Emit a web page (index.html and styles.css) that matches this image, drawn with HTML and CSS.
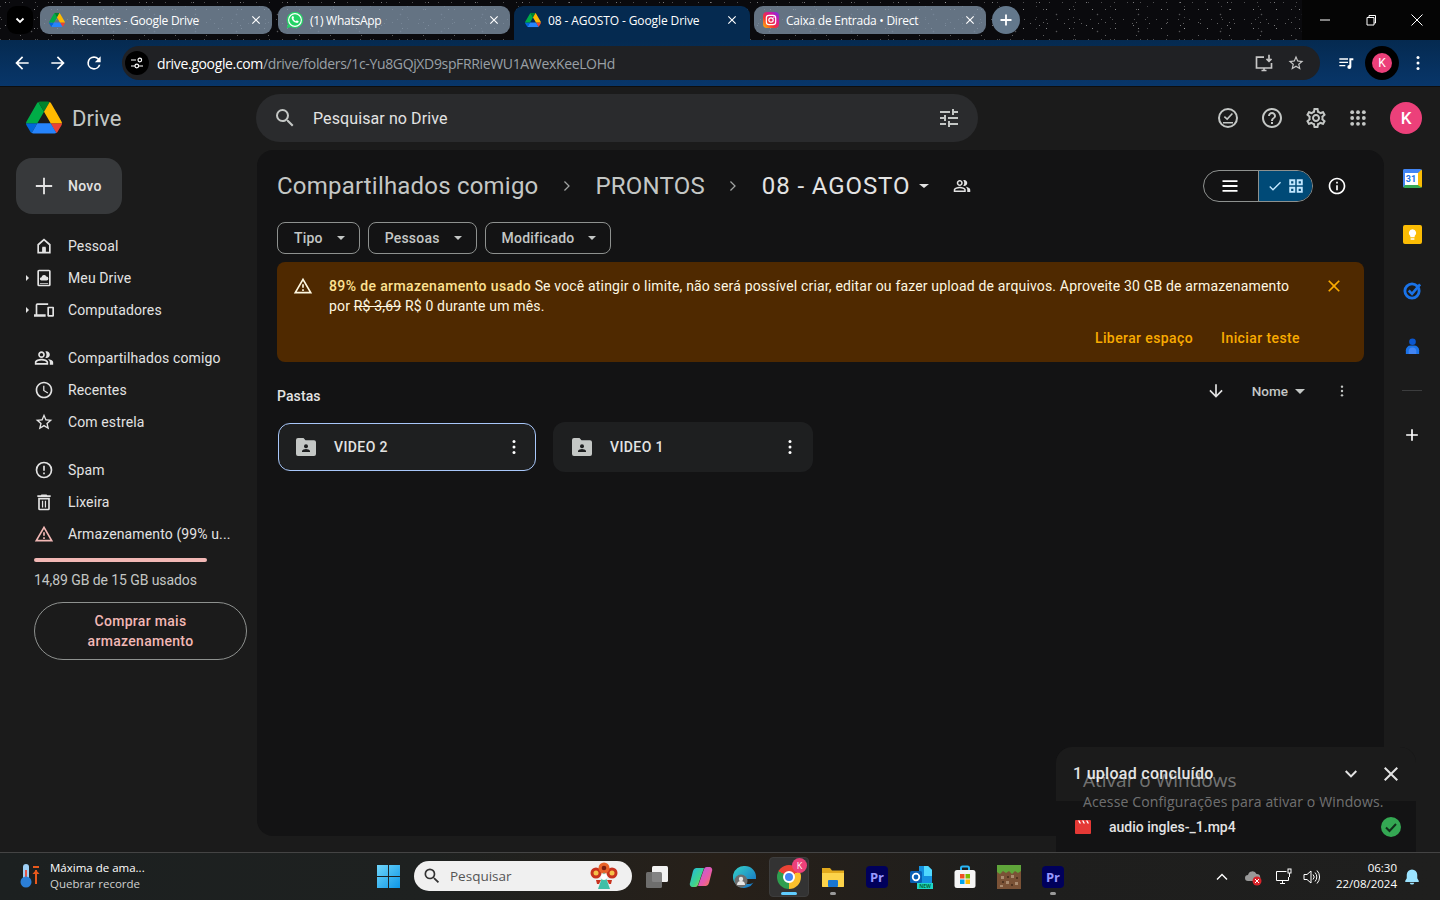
FILE: index.html
```html
<!DOCTYPE html>
<html lang="pt-BR">
<head>
<meta charset="utf-8">
<title>08 - AGOSTO - Google Drive</title>
<link rel="stylesheet" href="styles.css">
</head>
<body>
<svg class="sprite" xmlns="http://www.w3.org/2000/svg">
  <symbol id="drive" viewBox="0 0 87.3 78">
    <path fill="#0066da" d="m6.6 66.85 3.85 6.65c.8 1.4 1.95 2.5 3.3 3.3l13.75-23.8h-27.5c0 1.55.4 3.1 1.2 4.5z"/>
    <path fill="#00ac47" d="m43.65 25-13.75-23.8c-1.35.8-2.5 1.9-3.3 3.3l-25.4 44a9.06 9.06 0 0 0 -1.2 4.5h27.5z"/>
    <path fill="#ea4335" d="m73.55 76.8c1.35-.8 2.5-1.9 3.3-3.3l1.6-2.75 7.65-13.25c.8-1.4 1.2-2.95 1.2-4.5h-27.502l5.852 11.5z"/>
    <path fill="#00832d" d="m43.65 25 13.75-23.8c-1.35-.8-2.9-1.2-4.5-1.2h-18.5c-1.6 0-3.15.45-4.5 1.2z"/>
    <path fill="#2684fc" d="m59.8 53h-32.3l-13.75 23.8c1.35.8 2.9 1.2 4.5 1.2h50.8c1.6 0 3.15-.45 4.5-1.2z"/>
    <path fill="#ffba00" d="m73.4 26.5-12.7-22c-.8-1.4-1.95-2.5-3.3-3.3l-13.75 23.8 16.15 28h27.45c0-1.55-.4-3.1-1.2-4.5z"/>
  </symbol>
  <symbol id="x" viewBox="0 0 24 24"><path d="M19 6.41 17.59 5 12 10.59 6.41 5 5 6.41 10.59 12 5 17.59 6.41 19 12 13.41 17.59 19 19 17.59 13.41 12z"/></symbol>
  <symbol id="people" viewBox="0 0 24 24"><path d="M16.67 13.13C18.04 14.06 19 15.32 19 17v3h4v-3c0-2.18-3.57-3.47-6.33-3.87zM15 12c2.21 0 4-1.79 4-4s-1.79-4-4-4c-.47 0-.91.1-1.33.24C14.5 5.27 15 6.58 15 8s-.5 2.73-1.33 3.76c.42.14.86.24 1.33.24zM9 12c2.21 0 4-1.79 4-4s-1.79-4-4-4-4 1.79-4 4 1.79 4 4 4zm0-6c1.1 0 2 .9 2 2s-.9 2-2 2-2-.9-2-2 .9-2 2-2zM9 13c-2.67 0-8 1.34-8 4v3h16v-3c0-2.66-5.33-4-8-4zm6 5H3v-.99C3.2 16.29 6.3 15 9 15s5.8 1.29 6 2z"/></symbol>
  <symbol id="folder" viewBox="0 0 20 18"><path d="M2 0h5.5l2 2.2H18a2 2 0 0 1 2 2V16a2 2 0 0 1-2 2H2a2 2 0 0 1-2-2V2a2 2 0 0 1 2-2z"/><circle cx="10" cy="8.2" r="2" fill="#1e1f20"/><path fill="#1e1f20" d="M6 14v-.9c0-1.4 2.6-2.1 4-2.1s4 .7 4 2.1v.9z"/></symbol>
  <symbol id="dots" viewBox="0 0 24 24"><circle cx="12" cy="5.5" r="1.8"/><circle cx="12" cy="12" r="1.8"/><circle cx="12" cy="18.5" r="1.8"/></symbol>
  <symbol id="warn" viewBox="0 0 24 24"><path d="M1 21h22L12 2 1 21zm3.47-2L12 5.99 19.53 19H4.47zM11 16h2v2h-2zM11 10h2v4h-2z"/></symbol>
</svg>

<header class="tabstrip">
  <button class="tabsearch"><svg class="i14 line" viewBox="0 0 14 14"><path d="M3.5 5.500 7 9 10.500 5.500" stroke="#fff" stroke-width="1.800"/></svg></button>
  <div class="tab first">
    <svg class="fav" viewBox="0 0 87.3 78"><use href="#drive"/></svg>
    <span class="tab-title">Recentes - Google Drive</span>
    <svg class="tab-x"><use href="#x"/></svg>
  </div>
  <div class="tab">
    <svg class="fav wa" viewBox="0 0 24 24"><circle cx="12" cy="12" r="11" fill="#25d366"/><path fill="#25d366" d="M1 23l1.900-6.500 4.600 4.600z"/><circle cx="12" cy="12" r="8.500" fill="none" stroke="#fff" stroke-width="1.500"/><path fill="#fff" d="M8.600 7c.4-.4 1-.4 1.200.1l.8 1.800c.1.300 0 .6-.2.8l-.6.7c.7 1.400 1.900 2.500 3.400 3.200l.7-.8c.2-.2.5-.3.8-.2l1.800.8c.4.2.5.7.2 1.200-.6 1-1.700 1.500-2.900 1.200C10.500 15 8.300 12.800 7.600 10c-.3-1.100.2-2.300 1-3z"/></svg>
    <span class="tab-title">(1) WhatsApp</span>
    <svg class="tab-x"><use href="#x"/></svg>
  </div>
  <div class="tab active">
    <svg class="fav" viewBox="0 0 87.3 78"><use href="#drive"/></svg>
    <span class="tab-title">08 - AGOSTO - Google Drive</span>
    <svg class="tab-x"><use href="#x"/></svg>
  </div>
  <div class="tab">
    <svg class="fav" viewBox="0 0 24 24"><defs><linearGradient id="ig" x1="0" y1="1" x2="1" y2="0"><stop offset="0" stop-color="#fdc20a"/><stop offset=".35" stop-color="#f5372e"/><stop offset=".7" stop-color="#d3179e"/><stop offset="1" stop-color="#6a37f0"/></linearGradient></defs><rect width="24" height="24" rx="6" fill="url(#ig)"/><rect x="5" y="5" width="14" height="14" rx="4" fill="none" stroke="#fff" stroke-width="1.8"/><circle cx="12" cy="12" r="3.300" fill="none" stroke="#fff" stroke-width="1.8"/><circle cx="16.300" cy="7.700" r="1" fill="#fff"/></svg>
    <span class="tab-title">Caixa de Entrada • Direct</span>
    <svg class="tab-x"><use href="#x"/></svg>
  </div>
  <button class="newtab"><svg class="i14 line" viewBox="0 0 14 14"><path d="M7 1.500v11M1.500 7h11" stroke="#fff" stroke-width="1.800"/></svg></button>
  <div class="winctl">
    <span class="winbtn"><svg class="i14 line" viewBox="0 0 14 14"><path d="M2 7h10" stroke="#fff"/></svg></span>
    <span class="winbtn"><svg class="i14 line" viewBox="0 0 14 14"><path d="M3 4.500h7v7.500H3zM5 4.500V2.500h6.500V10H10" stroke="#fff"/></svg></span>
    <span class="winbtn"><svg class="i14 line" viewBox="0 0 14 14"><path d="M1.500 1.500l11 11M12.500 1.500l-11 11" stroke="#fff"/></svg></span>
  </div>
</header>

<nav class="toolbar">
  <button class="tbtn"><svg class="i20 white" viewBox="0 0 24 24"><path d="M20 11H7.830l5.590-5.590L12 4l-8 8 8 8 1.410-1.410L7.830 13H20z"/></svg></button>
  <button class="tbtn"><svg class="i20 white" viewBox="0 0 24 24"><path d="M12 4l-1.410 1.410L16.170 11H4v2h12.170l-5.580 5.590L12 20l8-8z"/></svg></button>
  <button class="tbtn"><svg class="i20 white" viewBox="0 0 24 24"><path d="M17.650 6.350A7.958 7.958 0 0 0 12 4a8 8 0 1 0 7.730 10h-2.080A6 6 0 1 1 12 6c1.660 0 3.140.69 4.220 1.780L13 11h7V4z"/></svg></button>
  <div class="omnibox">
    <span class="siteinfo"><svg class="i14 line" viewBox="0 0 14 14"><path d="M1 4h5M9 10h4M1 10h4" stroke="#fff" stroke-width="1.200"/><circle cx="9.800" cy="4" r="1.800" stroke="#fff" stroke-width="1.200"/><circle cx="6.800" cy="10" r="1.800" stroke="#fff" stroke-width="1.200"/></svg></span>
    <span class="url"><b>drive.google.com</b>/drive/folders/1c-Yu8GQjXD9spFRRieWU1AWexKeeLOHd</span>
    <svg class="i20 line omni-install" viewBox="0 0 24 24" stroke="#c7c7c7" stroke-width="2"><path d="M12 5H3v13h18v-6M9 21h6M12 18v3"/><path d="M18 2v8m-3-3 3 3 3-3"/></svg>
    <svg class="i18 omni-star" viewBox="0 0 24 24"><path fill="#c7c7c7" d="M22 9.240l-7.190-.62L12 2 9.190 8.630 2 9.240l5.460 4.730L5.820 21 12 17.270 18.180 21l-1.630-7.030L22 9.240zM12 15.400l-3.760 2.270 1-4.280-3.320-2.880 4.380-.38L12 6.100l1.710 4.040 4.380.38-3.320 2.880 1 4.280L12 15.400z"/></svg>
  </div>
  <button class="tbtn media"><svg class="i16 white" viewBox="0 0 24 24"><path d="M2 5h13v2H2zM2 10h13v2H2zM2 15h9v2H2zM17 5h6v3h-3v10a3 3 0 1 1-3-3z"/></svg></button>
  <span class="tbtn"><span class="profile"><span class="profile-k">K</span></span></span>
  <button class="tbtn"><svg class="i20 white" viewBox="0 0 24 24"><use href="#dots"/></svg></button>
</nav>

<div class="app">
  <div class="topbar">
    <div class="brand">
      <svg class="logo"><use href="#drive"/></svg>
      <span class="brand-name">Drive</span>
    </div>
    <div class="searchbox">
      <svg class="i24 grey" viewBox="0 0 24 24"><path d="M15.500 14h-.79l-.28-.27A6.471 6.471 0 0 0 16 9.500 6.500 6.500 0 1 0 9.500 16c1.610 0 3.090-.59 4.230-1.570l.27.28v.79l5 4.990L20.490 19l-4.990-5zm-6 0C7.010 14 5 11.990 5 9.500S7.010 5 9.500 5 14 7.010 14 9.500 11.990 14 9.500 14z"/></svg>
      <span class="search-label">Pesquisar no Drive</span>
      <svg class="i24 grey tune" viewBox="0 0 24 24"><path d="M3 17v2h6v-2H3zM3 5v2h10V5H3zm10 16v-2h8v-2h-8v-2h-2v6h2zM7 9v2H3v2h4v2h2V9H7zm14 4v-2H11v2h10zm-6-4h2V7h4V5h-4V3h-2v6z"/></svg>
    </div>
    <div class="top-actions">
      <span class="topbtn"><svg class="i24 grey" viewBox="0 0 24 24"><path d="M12 2a10 10 0 1 0 0 20 10 10 0 0 0 0-20zm0 18a8 8 0 1 1 0-16 8 8 0 0 1 0 16z"/><path d="M7 16h10v1.500H7zM15.800 7l1.200 1.100-5.800 6.100-3.400-3 1.100-1.200 2.200 2z"/></svg></span>
      <span class="topbtn"><svg class="i24 grey" viewBox="0 0 24 24"><path d="M11 18h2v-2h-2v2zm1-16C6.480 2 2 6.480 2 12s4.480 10 10 10 10-4.480 10-10S17.520 2 12 2zm0 18c-4.410 0-8-3.590-8-8s3.590-8 8-8 8 3.590 8 8-3.590 8-8 8zm0-14c-2.210 0-4 1.790-4 4h2c0-1.100.9-2 2-2s2 .9 2 2c0 2-3 1.750-3 5h2c0-2.250 3-2.500 3-5 0-2.210-1.790-4-4-4z"/></svg></span>
      <span class="topbtn"><svg class="i24 grey" viewBox="0 0 24 24"><path d="M19.430 12.980c.04-.32.07-.64.07-.98 0-.34-.03-.66-.07-.98l2.110-1.650c.19-.15.24-.42.12-.64l-2-3.460c-.09-.16-.26-.25-.44-.25-.06 0-.12.01-.17.03l-2.490 1c-.52-.4-1.080-.73-1.690-.98l-.38-2.650C14.460 2.180 14.250 2 14 2h-4c-.25 0-.46.18-.49.42l-.38 2.650c-.61.25-1.170.59-1.690.98l-2.490-1c-.06-.02-.12-.03-.18-.03-.17 0-.34.09-.43.25l-2 3.460c-.13.22-.07.49.12.64l2.110 1.650c-.04.32-.07.65-.07.98 0 .33.03.66.07.98l-2.110 1.650c-.19.15-.24.42-.12.64l2 3.460c.09.16.26.25.44.25.06 0 .12-.01.17-.03l2.490-1c.52.4 1.080.73 1.690.98l.38 2.650c.03.24.24.42.49.42h4c.25 0 .46-.18.49-.42l.38-2.650c.61-.25 1.170-.59 1.690-.98l2.490 1c.06.02.12.03.18.03.17 0 .34-.09.43-.25l2-3.460c.12-.22.07-.49-.12-.64l-2.110-1.650zm-1.980-1.710c.04.31.05.52.05.73 0 .21-.02.43-.05.73l-.14 1.130.89.7 1.080.84-.7 1.210-1.270-.51-1.040-.42-.9.68c-.43.32-.84.56-1.250.73l-1.060.43-.16 1.130-.2 1.350h-1.400l-.19-1.350-.16-1.130-1.060-.43c-.43-.18-.83-.41-1.230-.71l-.91-.7-1.060.43-1.270.51-.7-1.210 1.080-.84.89-.7-.14-1.130c-.03-.31-.05-.54-.05-.74s.02-.43.05-.73l.14-1.130-.89-.7-1.080-.84.7-1.210 1.270.51 1.040.42.9-.68c.43-.32.84-.56 1.250-.73l1.060-.43.16-1.130.2-1.350h1.390l.19 1.350.16 1.130 1.060.43c.43.18.83.41 1.230.71l.91.7 1.060-.43 1.270-.51.7 1.210-1.070.85-.89.7.14 1.130zM12 8c-2.210 0-4 1.790-4 4s1.790 4 4 4 4-1.790 4-4-1.790-4-4-4zm0 6c-1.100 0-2-.9-2-2s.9-2 2-2 2 .9 2 2-.9 2-2 2z"/></svg></span>
      <span class="topbtn apps"><svg class="i20 grey" viewBox="0 0 24 24"><circle cx="5" cy="5" r="2.300"/><circle cx="12" cy="5" r="2.300"/><circle cx="19" cy="5" r="2.300"/><circle cx="5" cy="12" r="2.300"/><circle cx="12" cy="12" r="2.300"/><circle cx="19" cy="12" r="2.300"/><circle cx="5" cy="19" r="2.300"/><circle cx="12" cy="19" r="2.300"/><circle cx="19" cy="19" r="2.300"/></svg></span>
      <span class="avatar">K</span>
    </div>
  </div>

  <div class="workspace">
    <aside class="sidebar">
      <button class="novo"><svg class="i28 light" viewBox="0 0 24 24"><path d="M19 12.800h-6.200V19h-1.600v-6.200H5v-1.600h6.200V5h1.600v6.200H19z"/></svg><span>Novo</span></button>
      <ul class="nav first-nav">
        <li class="nav-row"><span class="caret-slot"></span><svg class="i20 light" viewBox="0 0 24 24"><path d="M12 3 4 10v11h16V10zm6 16h-4v-6h-4v6H6v-8l6-5.300 6 5.300z"/><path d="M10 14h4v6h-4z"/></svg><span>Pessoal</span></li>
        <li class="nav-row"><span class="caret-slot on"></span><svg class="i20 light" viewBox="0 0 24 24"><path d="M6 2h12a2 2 0 0 1 2 2v16a2 2 0 0 1-2 2H6a2 2 0 0 1-2-2V4a2 2 0 0 1 2-2zm0 2v16h12V4zm1 14h10v1H7z"/><path d="M9 15a2 2 0 0 1 0-4 3 3 0 0 1 5.700-.8A2.400 2.400 0 0 1 15 15z"/></svg><span>Meu Drive</span></li>
        <li class="nav-row"><span class="caret-slot on"></span><svg class="i20 light" viewBox="0 0 24 24"><path d="M4 6h13V4H4a2 2 0 0 0-2 2v11H0v3h14v-3H4zm19 2h-6a1 1 0 0 0-1 1v10a1 1 0 0 0 1 1h6a1 1 0 0 0 1-1V9a1 1 0 0 0-1-1zm-1 10h-4v-8h4z"/></svg><span>Computadores</span></li>
      </ul>
      <ul class="nav">
        <li class="nav-row"><span class="caret-slot"></span><svg class="i20 light"><use href="#people"/></svg><span>Compartilhados comigo</span></li>
        <li class="nav-row"><span class="caret-slot"></span><svg class="i20 light" viewBox="0 0 24 24"><path d="M11.990 2C6.470 2 2 6.480 2 12s4.470 10 9.990 10C17.520 22 22 17.520 22 12S17.520 2 11.990 2zM12 20c-4.420 0-8-3.580-8-8s3.580-8 8-8 8 3.580 8 8-3.580 8-8 8zm.5-13H11v6l5.250 3.150.75-1.230-4.500-2.670z"/></svg><span>Recentes</span></li>
        <li class="nav-row"><span class="caret-slot"></span><svg class="i20 light" viewBox="0 0 24 24"><path d="M22 9.240l-7.190-.62L12 2 9.190 8.630 2 9.240l5.460 4.730L5.820 21 12 17.270 18.180 21l-1.630-7.030L22 9.240zM12 15.400l-3.760 2.270 1-4.280-3.320-2.880 4.380-.38L12 6.100l1.710 4.040 4.380.38-3.320 2.880 1 4.280L12 15.400z"/></svg><span>Com estrela</span></li>
      </ul>
      <ul class="nav">
        <li class="nav-row"><span class="caret-slot"></span><svg class="i20 light" viewBox="0 0 24 24"><path d="M12 2a10 10 0 1 0 0 20 10 10 0 0 0 0-20zm0 18a8 8 0 1 1 0-16 8 8 0 0 1 0 16zM11 7h2v6h-2zM11 15h2v2h-2z"/></svg><span>Spam</span></li>
        <li class="nav-row"><span class="caret-slot"></span><svg class="i20 light" viewBox="0 0 24 24"><path d="M5 7h14v13a2 2 0 0 1-2 2H7a2 2 0 0 1-2-2zm2 2v11h10V9zM9 3h6l1 1h4v2H4V4h4zM9.500 10.500H11v8H9.500zM13 10.500h1.500v8H13z"/></svg><span>Lixeira</span></li>
        <li class="nav-row"><span class="caret-slot"></span><svg class="i20 pink"><use href="#warn"/></svg><span>Armazenamento (99% u...</span></li>
      </ul>
      <div class="quota-bar"></div>
      <div class="quota-text">14,89 GB de 15 GB usados</div>
      <button class="buy">Comprar mais armazenamento</button>
    </aside>

    <main class="content">
      <div class="crumbs">
        <span class="crumb">Compartilhados comigo</span>
        <svg class="i20 crumb-sep" viewBox="0 0 24 24"><path d="M9.500 6 8.400 7.100 13.300 12l-4.900 4.900L9.500 18l6-6z"/></svg>
        <span class="crumb">PRONTOS</span>
        <svg class="i20 crumb-sep" viewBox="0 0 24 24"><path d="M9.500 6 8.400 7.100 13.300 12l-4.900 4.900L9.500 18l6-6z"/></svg>
        <span class="crumb current">08 - AGOSTO</span>
        <span class="caret lg"></span>
        <svg class="i18 light shared"><use href="#people"/></svg>
        <div class="view-toggle">
          <span class="vt-list"><svg class="i20 white" viewBox="0 0 24 24"><path d="M3 5h18v2.200H3zM3 10.900h18v2.200H3zM3 16.800h18V19H3z"/></svg></span>
          <span class="vt-grid">
            <svg class="i16 blue" viewBox="0 0 24 24"><path d="M9 16.200 4.800 12l-1.400 1.400L9 19 21 7l-1.400-1.400z"/></svg>
            <svg class="i18 blue" viewBox="0 0 24 24"><path d="M3 3h8v8H3zm2.500 2.500v3h3v-3zM13 3h8v8h-8zm2.500 2.500v3h3v-3zM3 13h8v8H3zm2.500 2.500v3h3v-3zM13 13h8v8h-8zm2.500 2.500v3h3v-3z"/></svg>
          </span>
        </div>
        <svg class="i20 white info" viewBox="0 0 24 24"><path d="M11 7h2v2h-2zm0 4h2v6h-2zm1-9C6.480 2 2 6.480 2 12s4.480 10 10 10 10-4.480 10-10S17.520 2 12 2zm0 18c-4.410 0-8-3.590-8-8s3.590-8 8-8 8 3.590 8 8-3.590 8-8 8z"/></svg>
      </div>

      <div class="filters">
        <button class="chip"><span>Tipo</span><span class="caret-box"><span class="caret"></span></span></button>
        <button class="chip"><span>Pessoas</span><span class="caret-box"><span class="caret"></span></span></button>
        <button class="chip"><span>Modificado</span><span class="caret-box"><span class="caret"></span></span></button>
      </div>

      <section class="banner">
        <div class="banner-top">
          <svg class="i20 cream"><use href="#warn"/></svg>
          <p class="banner-text"><strong>89% de armazenamento usado</strong> Se você atingir o limite, não será possível criar, editar ou fazer upload de arquivos. Aproveite 30 GB de armazenamento<br>por <s>R$ 3,69</s> R$ 0 durante um mês.</p>
          <svg class="i20 amber banner-x"><use href="#x"/></svg>
        </div>
        <div class="banner-actions"><span>Liberar espaço</span><span>Iniciar teste</span></div>
      </section>

      <div class="section-head">
        <h2 class="section-title">Pastas</h2>
        <div class="sort">
          <svg class="i20 light" viewBox="0 0 24 24"><path d="M20 12l-1.410-1.410L13 16.170V4h-2v12.170l-5.580-5.590L4 12l8 8z"/></svg>
          <span class="sort-name">Nome</span><span class="caret sort-caret"></span>
          <svg class="i16 grey sort-more"><use href="#dots"/></svg>
        </div>
      </div>

      <div class="folders">
        <div class="folder selected"><svg class="folder-i"><use href="#folder"/></svg><span class="folder-name">VIDEO 2</span><svg class="i20 white folder-more"><use href="#dots"/></svg></div>
        <div class="folder"><svg class="folder-i"><use href="#folder"/></svg><span class="folder-name">VIDEO 1</span><svg class="i20 white folder-more"><use href="#dots"/></svg></div>
      </div>
    </main>

    <aside class="rail">
      <span class="rail-i cal"><span class="cal-num">31</span></span>
      <svg class="rail-svg" viewBox="0 0 20 20"><rect width="20" height="20" rx="2" fill="#fbbc04"/><path d="M10 4.500a4 4 0 0 1 2.300 7.200V13H7.700v-1.300A4 4 0 0 1 10 4.500zM8 14h4v1.500H8z" fill="#fff"/></svg>
      <svg class="rail-svg" viewBox="0 0 20 20"><circle cx="9.500" cy="10.500" r="7.500" fill="none" stroke="#1a73e8" stroke-width="3"/><path d="M6 10 9.500 13.500 18 3.500" fill="none" stroke="#1a73e8" stroke-width="2.800"/></svg>
      <svg class="rail-svg" viewBox="0 0 20 20"><circle cx="10" cy="5" r="3.500" fill="#0b57d0"/><path d="M3 18v-4a5 5 0 0 1 5-5h4a5 5 0 0 1 5 5v4z" fill="#1a73e8"/><path d="M6 18v-3a4 4 0 0 1 8 0v3z" fill="#4285f4"/></svg>
      <span class="rail-sep"></span>
      <svg class="i20 white rail-plus" viewBox="0 0 24 24"><path d="M19 13h-6v6h-2v-6H5v-2h6V5h2v6h6z"/></svg>
    </aside>

    <section class="upload">
      <div class="upload-head">
        <span class="upload-title">1 upload concluído</span>
        <svg class="i24 light up-chev" viewBox="0 0 24 24"><path d="M16.590 8.300 12 12.880 7.410 8.300 6 9.710l6 6 6-6z"/></svg>
        <svg class="i24 light up-x"><use href="#x"/></svg>
      </div>
      <div class="upload-row">
        <svg class="clap" viewBox="0 0 16 14"><path fill="#e53935" d="M1 0h14a1 1 0 0 1 1 1v12a1 1 0 0 1-1 1H1a1 1 0 0 1-1-1V1a1 1 0 0 1 1-1z"/><path fill="#fff" d="M3 .5h1.500L6 3.500H4.500zM7 .5h1.500L10 3.500H8.500zM11 .5h1.500L14 3.500h-1.500z"/></svg>
        <span class="upload-name">audio ingles-_1.mp4</span>
        <svg class="i20 up-ok" viewBox="0 0 20 20"><circle cx="10" cy="10" r="10" fill="#34a853"/><path d="M5 10.500 8.500 14 15 7" fill="none" stroke="#10301b" stroke-width="2"/></svg>
      </div>
    </section>

    <div class="watermark">
      <div class="wm-title">Ativar o Windows</div>
      <div class="wm-sub">Acesse Configurações para ativar o Windows.</div>
    </div>
  </div>
</div>

<footer class="taskbar">
  <div class="widget">
    <svg class="widget-i" viewBox="0 0 20 26"><rect x="3" y="1" width="6" height="16" rx="3" fill="#9fd0f5"/><rect x="5" y="7" width="2" height="10" fill="#e0564a"/><circle cx="6" cy="19" r="5.500" fill="#2b7fd8"/><path d="M13 3h6v2h-6zM15 7h2v14h-2z" fill="#e8591c"/><path d="M12.500 11 16 7l3.500 4z" fill="#e8591c"/></svg>
    <div class="widget-text"><div class="w-top">Máxima de ama...</div><div class="w-sub">Quebrar recorde</div></div>
  </div>
  <svg class="winlogo" viewBox="0 0 24 24"><defs><linearGradient id="wl" x1="0" y1="0" x2="1" y2="1"><stop offset="0" stop-color="#6fd6fb"/><stop offset="1" stop-color="#0d96e6"/></linearGradient></defs><path fill="url(#wl)" d="M0 0h11.500v11.500H0zM12.500 0H24v11.500H12.500zM0 12.500h11.500V24H0zM12.500 12.500H24V24H12.500z"/></svg>
  <div class="ts-search">
    <svg class="i20 dark" viewBox="0 0 24 24"><path d="M15.500 14h-.79l-.28-.27A6.471 6.471 0 0 0 16 9.500 6.500 6.500 0 1 0 9.500 16c1.610 0 3.090-.59 4.230-1.570l.27.28v.79l5 4.990L20.490 19l-4.990-5zm-6 0C7.010 14 5 11.990 5 9.500S7.010 5 9.500 5 14 7.010 14 9.500 11.990 14 9.500 14z"/></svg>
    <span class="ts-label">Pesquisar</span>
    <svg class="flower" viewBox="0 0 28 28"><circle cx="6" cy="11" r="5.500" fill="#c8321e"/><circle cx="22" cy="11" r="5.500" fill="#c8321e"/><circle cx="14" cy="6" r="5.500" fill="#e8632a"/><circle cx="6" cy="11" r="2.500" fill="#f5c14a"/><circle cx="22" cy="11" r="2.500" fill="#f5c14a"/><circle cx="14" cy="6" r="2.300" fill="#7a1f12"/><path d="M14 10 20 27H8z" fill="#3fbfa6"/><circle cx="14" cy="15" r="3" fill="#fff"/><path d="M6 18h5l-2 4H7zM22 18h-5l2 4h2z" fill="#c8321e"/></svg>
  </div>
  <div class="apps-row">
    <span class="ta"><svg class="ta-i" viewBox="0 0 24 24"><rect x="7" y="1" width="16" height="16" rx="1.500" fill="#f2f2f2"/><rect x="1" y="7" width="16" height="16" rx="1.500" fill="#777" fill-opacity=".9"/></svg></span>
    <span class="ta"><svg class="ta-i" viewBox="0 0 24 24"><defs><linearGradient id="cp1" x1="0" y1="0" x2="1" y2="1"><stop offset="0" stop-color="#1fb6e8"/><stop offset=".6" stop-color="#3fd48a"/><stop offset="1" stop-color="#f5c33c"/></linearGradient><linearGradient id="cp2" x1="0" y1="0" x2="1" y2="1"><stop offset="0" stop-color="#b45ee8"/><stop offset=".6" stop-color="#e85aa8"/><stop offset="1" stop-color="#f5803c"/></linearGradient></defs><path fill="url(#cp1)" d="M7 3h8L9 20a3 3 0 0 1-3 2H3a3 3 0 0 1-2-4l3-12a4 4 0 0 1 3-3z"/><path fill="url(#cp2)" d="M17 21H9l6-17a3 3 0 0 1 3-2h3a3 3 0 0 1 2 4l-3 12a4 4 0 0 1-3 3z"/></svg></span>
    <span class="ta"><svg class="ta-i" viewBox="0 0 24 24"><defs><linearGradient id="eg" x1="0" y1="0" x2="1" y2="1"><stop offset="0" stop-color="#37d4c8"/><stop offset="1" stop-color="#1268c4"/></linearGradient></defs><path fill="url(#eg)" d="M12 1a11 11 0 0 1 11 11v2H9c.3 3 3 5 6 5 2 0 4-.6 5.500-1.600A11 11 0 1 1 12 1z"/><circle cx="8" cy="16" r="6.500" fill="#6d6d6d"/><circle cx="8" cy="14" r="2.200" fill="#e6e6e6"/><path d="M4 20a4 4 0 0 1 8 0z" fill="#e6e6e6"/></svg></span>
    <span class="ta on"><span class="chrome"><span class="chrome-core"></span></span><span class="ta-badge">K</span><span class="ta-bar"></span></span>
    <span class="ta"><svg class="ta-i" viewBox="0 0 24 24"><path d="M1 3h8l2 2.500h12V21a1 1 0 0 1-1 1H2a1 1 0 0 1-1-1z" fill="#e2a91c"/><path d="M1 8h22v13a1 1 0 0 1-1 1H2a1 1 0 0 1-1-1z" fill="#fcd34a"/><rect x="7" y="15" width="10" height="7" rx="1" fill="#1976d2"/></svg><span class="ta-dot"></span></span>
    <span class="ta"><span class="pr">Pr</span></span>
    <span class="ta"><svg class="ta-i" viewBox="0 0 24 24"><path d="M10 1h9l4 4v14H10z" fill="#1490df"/><path d="M15 1h4l4 4v6h-8z" fill="#50d9ff"/><rect x="1" y="6" width="12" height="12" rx="1.500" fill="#0a5fb4"/><circle cx="7" cy="12" r="3.300" fill="none" stroke="#fff" stroke-width="1.800"/><rect x="8" y="18" width="16" height="6" fill="#1fd6c4"/><text class="new-tag" x="16" y="23">NEW</text></svg></span>
    <span class="ta"><svg class="ta-i" viewBox="0 0 24 24"><path d="M8 6V3a1.500 1.500 0 0 1 1.500-1.500h5A1.500 1.500 0 0 1 16 3v3" fill="none" stroke="#29b6f6" stroke-width="2"/><rect x="1.500" y="5" width="21" height="18" rx="2.500" fill="#f5f5f5"/><rect x="7" y="9" width="4.500" height="4.500" fill="#f25022"/><rect x="12.500" y="9" width="4.500" height="4.500" fill="#7fba00"/><rect x="7" y="14.500" width="4.500" height="4.500" fill="#00a4ef"/><rect x="12.500" y="14.500" width="4.500" height="4.500" fill="#ffb900"/></svg></span>
    <span class="ta"><svg class="ta-i" viewBox="0 0 24 24"><rect width="24" height="24" fill="#7a5236"/><path d="M0 0h24v6l-3 2-3-2-3 3-3-3-3 2-3-2-3 3-3-2z" fill="#5fa53a"/><path d="M4 11h3v3H4zM14 10h3v3h-3zM9 16h3v3H9zM18 17h3v3h-3zM3 20h3v2H3z" fill="#a98a6e"/><path d="M10 11h2v2h-2zM19 12h2v2h-2zM14 19h2v2h-2zM5 16h2v2H5z" fill="#513420"/></svg></span>
    <span class="ta"><span class="pr">Pr</span><span class="ta-dot"></span></span>
  </div>
  <div class="tray">
    <span class="tray-slot chev"><svg class="i14 line" viewBox="0 0 14 14"><path d="M2 9.500 7 4.500 12 9.500" stroke="#fff" stroke-width="1.400"/></svg></span>
    <span class="tray-slot cloud"><svg class="i18" viewBox="0 0 18 18"><path d="M4 13a3 3 0 0 1 0-6 4.500 4.500 0 0 1 8.500-1A3.500 3.500 0 0 1 13 13z" fill="#999"/><circle cx="13" cy="13" r="4.500" fill="#d8232a"/><path d="M11 11l4 4m0-4-4 4" stroke="#fff"/></svg></span>
    <span class="tray-slot net"><svg class="i18 line" viewBox="0 0 18 18" stroke="#fff"><path d="M11.500 3.500H1.500v9h12V9M5 15.500h5M7.500 12.500v3"/><rect x="13" y="1" width="3" height="4"/><path d="M14.500 5v4"/></svg></span>
    <span class="tray-slot vol"><svg class="i18 line" viewBox="0 0 18 18" stroke="#fff"><path d="M2 6.500h3L9 3v12l-4-3.500H2z"/><path d="M11 6.500a3.500 3.500 0 0 1 0 5M13 4.500a6.500 6.500 0 0 1 0 9M15 2.500a9.500 9.500 0 0 1 0 13"/></svg></span>
    <div class="clock"><div>06:30</div><div>22/08/2024</div></div>
    <span class="tray-slot bell"><svg class="i18" viewBox="0 0 24 24"><path fill="#9be3ff" d="M12 22a3 3 0 0 0 3-2.500H9A3 3 0 0 0 12 22zM12 2a7 7 0 0 0-7 7v4.500L3 17v1.500h18V17l-2-3.500V9a7 7 0 0 0-7-7z"/></svg></span>
  </div>
</footer>
</body>
</html>
```

FILE: styles.css
```css
* { box-sizing: border-box; }
html, body { margin: 0; padding: 0; }
body {
  width: 1440px; height: 900px; overflow: hidden;
  display: flex; flex-direction: column;
  background: #1b1b1b;
  font-family: Roboto, "Liberation Sans", sans-serif;
  color: #e3e3e3;
}
button { font: inherit; color: inherit; background: none; border: 0; padding: 0; }
ul { list-style: none; margin: 0; padding: 0; }
h2, p { margin: 0; }
svg { display: block; flex: none; fill: currentColor; }
svg.line { fill: none; }
.sprite { position: absolute; width: 0; height: 0; }

.i14 { width: 14px; height: 14px; }
.i16 { width: 16px; height: 16px; }
.i18 { width: 18px; height: 18px; }
.i20 { width: 20px; height: 20px; }
.i24 { width: 24px; height: 24px; }
.i28 { width: 28px; height: 28px; }
.white { color: #fff; }
.light { color: #e3e3e3; }
.grey { color: #c4c7c5; }
.pink { color: #f2b8b5; }
.cream { color: #fef7e0; }
.amber { color: #f9ab00; }
.dark { color: #333; }
.blue { color: #c2e7ff; }

/* browser tabs */
.tabstrip {
  height: 40px; flex: none; display: flex; align-items: flex-start; padding-top: 6px;
  background-color: #0a0a0d;
  background-image:
    radial-gradient(circle, rgba(255,255,255,.5) 0.5px, transparent 1px),
    radial-gradient(circle, rgba(255,255,255,.35) 0.5px, transparent 1px),
    radial-gradient(circle, rgba(255,255,255,.3) 0.6px, transparent 1.1px),
    radial-gradient(circle, rgba(255,255,255,.35) 0.5px, transparent 1px),
    radial-gradient(circle, rgba(255,255,255,.25) 0.5px, transparent 1px),
    radial-gradient(circle, rgba(255,255,255,.45) 0.5px, transparent 1px),
    radial-gradient(circle, rgba(255,255,255,.3) 0.5px, transparent 1px),
    radial-gradient(circle, rgba(255,255,255,.28) 0.5px, transparent 1px);
  background-size: 23px 19px, 31px 13px, 41px 17px, 17px 29px, 37px 11px, 47px 23px, 11px 31px, 13px 37px;
  background-position: 0 0, 5px 3px, 11px 6px, 2px 9px, 19px 1px, 29px 14px, 7px 4px, 3px 21px;
  font-family: "Open Sans", "Noto Sans", sans-serif;
  font-size: 12px; color: #fff;
}
.tabsearch {
  width: 26px; height: 28px; margin-left: 7px; margin-right: 7px;
  border-radius: 9px; background: #000;
  display: flex; align-items: center; justify-content: center;
}
.tab {
  width: 232px; height: 28px; margin-right: 6px; padding: 0 9px;
  border-radius: 9px; display: flex; align-items: center;
  background: rgba(125,145,165,.78);
}
.tab.active {
  width: 236px; height: 34px; margin-left: -2px; margin-right: 4px; padding: 0 11px 6px 11px;
  border-radius: 9px 9px 0 0; background: #052a50;
}
.tab.active .tab-title { letter-spacing: -.1px; }
.fav { width: 16px; height: 16px; margin-right: 7px; }
.fav.wa { width: 18px; height: 18px; margin-left: -1px; margin-right: 6px; }
.tab-title { flex: 1; white-space: nowrap; overflow: hidden; letter-spacing: -.25px; }
.tab-x { width: 14px; height: 14px; color: #fff; }
.newtab {
  width: 28px; height: 28px; border-radius: 50%;
  background: #63788c; display: flex; align-items: center; justify-content: center;
}
.winctl { margin-left: auto; margin-top: -6px; height: 40px; width: 138px; display: flex; background: #050505; }
.winbtn { flex: 1; display: flex; align-items: center; justify-content: center; }

/* browser toolbar */
.toolbar {
  height: 47px; flex: none; padding: 6px 0 0 4px;
  display: flex; align-items: flex-start;
  background: linear-gradient(#052a50, #08366a);
  border-bottom: 1px solid #0e0e0e;
}
.tbtn { width: 36px; height: 34px; display: flex; align-items: center; justify-content: center; }
.omnibox {
  width: 1198px; height: 34px; margin-left: 10px; margin-right: 8px;
  border-radius: 17px; background: #202124;
  display: flex; align-items: center; padding-left: 3px;
}
.siteinfo { width: 24px; height: 24px; border-radius: 50%; background: #000; display: flex; align-items: center; justify-content: center; }
.url { flex: 1; margin-left: 8px; font-family: "Open Sans", sans-serif; font-size: 14px; letter-spacing: -.35px; color: #9aa0a6; white-space: nowrap; }
.url b { font-weight: 400; color: #fff; }
.omni-install { margin-right: 13px; }
.omni-star { margin-right: 15px; }
.profile { width: 34px; height: 34px; border-radius: 50%; background: #000; display: flex; align-items: center; justify-content: center; }
.profile-k { width: 20px; height: 20px; border-radius: 50%; background: #ec407a; color: #fff; font-size: 12px; line-height: 20px; text-align: center; }

/* drive app */
.app { flex: 1; min-height: 0; display: flex; flex-direction: column; background: #1b1b1b; }
.topbar { height: 63px; flex: none; display: flex; align-items: flex-start; }
.brand { width: 256px; height: 56px; flex: none; display: flex; align-items: center; padding: 4px 0 0 26px; }
.logo { width: 36px; height: 33px; }
.brand-name { margin: 2px 0 0 10px; font-size: 22px; color: #c4c7c5; }
.searchbox {
  width: 722px; height: 48px; margin-top: 7px; padding: 0 17px;
  border-radius: 24px; background: #2a2b2d;
  display: flex; align-items: center;
}
.search-label { flex: 1; margin-left: 16px; font-size: 16px; letter-spacing: .1px; color: #e3e3e3; }
.top-actions { flex: 1; display: flex; align-items: center; margin-top: 15px; padding-left: 228px; }
.topbtn { width: 44px; height: 32px; display: flex; align-items: center; justify-content: center; }
.apps { width: 40px; }
.avatar {
  width: 32px; height: 32px; margin-left: 12px; border-radius: 50%;
  background: #ec407a; color: #fff; font-size: 17px; font-weight: 500; line-height: 32px; text-align: center;
}

.workspace { flex: 1; min-height: 0; position: relative; display: flex; }
.sidebar { width: 257px; flex: none; padding-top: 8px; }
.novo {
  width: 106px; height: 56px; margin-left: 16px; padding-left: 14px;
  display: flex; align-items: center; gap: 10px;
  border-radius: 16px; background: #37393b; font-size: 14px; font-weight: 500; letter-spacing: .3px;
}
.nav { margin-top: 16px; }
.first-nav { margin-top: 16px; }
.nav-row { height: 32px; padding-left: 24px; display: flex; align-items: center; font-size: 14px; letter-spacing: .12px; color: #e3e3e3; white-space: nowrap; }
.nav-row svg { margin-right: 14px; }
.caret-slot { width: 10px; flex: none; height: 10px; position: relative; }
.caret-slot.on::before {
  content: ""; display: block; margin: 2px 0 0 2px; width: 0; height: 0;
  border-left: 3px solid #e3e3e3; border-top: 3px solid transparent; border-bottom: 3px solid transparent;
}
.quota-bar { width: 173px; height: 4px; margin: 8px 0 0 34px; border-radius: 2px; background: #f2b8b5; }
.quota-text { margin: 8px 0 0 34px; font-size: 14px; line-height: 20px; letter-spacing: -.08px; color: #c4c7c5; }
.buy {
  display: block; width: 213px; height: 58px; margin: 12px 0 0 34px; padding: 0 30px;
  border: 1px solid #8e918f; border-radius: 29px;
  color: #f2b8b5; font-size: 14px; font-weight: 500; line-height: 20px; letter-spacing: .3px;
}

.content {
  width: 1127px; height: 686px; flex: none; padding: 20px 20px 0;
  border-radius: 16px; background: #131314;
}
.crumbs { height: 32px; display: flex; align-items: center; }
.crumb { font-size: 24px; letter-spacing: .2px; color: #c4c7c5; white-space: nowrap; }
.crumb.current { letter-spacing: .9px; color: #e3e3e3; }
.crumb-sep { margin: 0 18.500px; color: #a0a3a1; }
.caret { display: block; width: 0; height: 0; border-left: 4px solid transparent; border-right: 4px solid transparent; border-top: 4px solid #c4c7c5; }
.caret.lg { margin-left: 9px; border-left-width: 5px; border-right-width: 5px; border-top-width: 4px; border-top-color: #e3e3e3; }
.shared { margin-left: 24px; }
.view-toggle {
  margin-left: auto; width: 110px; height: 32px; display: flex;
  border: 1px solid #8e918f; border-radius: 16px; overflow: hidden;
}
.vt-list { width: 55px; padding-right: 2px; display: flex; align-items: center; justify-content: center; border-right: 1px solid #8e918f; }
.vt-grid { flex: 1; display: flex; align-items: center; justify-content: center; gap: 4px; background: #004a77; }
.info { margin: 0 17px 0 14px; }

.filters { display: flex; gap: 8px; margin-top: 20px; }
.chip {
  height: 32px; padding: 0 6px 0 16px; display: flex; align-items: center; gap: 6px;
  border: 1px solid #8e918f; border-radius: 8px; font-size: 14px; font-weight: 500; letter-spacing: .2px; color: #c4c7c5;
}
.caret-box { width: 24px; display: flex; justify-content: center; }

.banner { height: 100px; margin-top: 8px; padding: 14px 0 0 16px; border-radius: 8px; background: #4f2900; }
.banner-top { display: flex; padding-right: 20px; }
.banner-text { flex: 1; margin-left: 16px; font-size: 14px; line-height: 20px; letter-spacing: .17px; color: #fef7e0; white-space: nowrap; }
.banner-text strong { font-weight: 500; letter-spacing: .37px; color: #fde293; }
.banner-actions { display: flex; justify-content: flex-end; gap: 28px; margin-top: 12px; padding-right: 64px; font-size: 14px; font-weight: 500; line-height: 20px; letter-spacing: .4px; color: #f9ab00; }

.section-head { height: 24px; margin-top: 18px; display: flex; justify-content: space-between; }
.section-title { align-self: flex-end; font-size: 14px; font-weight: 500; line-height: 16px; letter-spacing: .1px; }
.sort { height: 22px; display: flex; align-items: center; }
.sort-name { margin-left: 26px; font-size: 13.500px; font-weight: 500; color: #c4c7c5; }
.sort-caret { margin-left: 7px; border-left-width: 5px; border-right-width: 5px; border-top-width: 5px; }
.sort-more { margin: 0 14px 0 29px; }

.folders { display: grid; grid-template-columns: 260px 260px; gap: 16px; margin-top: 18px; }
.folder {
  height: 50px; padding: 0 13px 0 19px; display: flex; align-items: center;
  border-radius: 12px; background: #1e1f20; font-size: 14px; font-weight: 500; letter-spacing: .4px;
}
.folder.selected { height: 48px; margin: 1px; padding: 0 11px 0 17px; border: 1px solid #a8c7fa; }
.folder-i { width: 20px; height: 18px; color: #c4c7c5; }
.folder-name { flex: 1; margin-left: 18px; color: #e3e3e3; }

.rail { width: 56px; flex: none; padding-top: 19px; display: flex; flex-direction: column; align-items: center; }
.rail-i, .rail-svg { width: 19px; height: 19px; flex: none; margin-bottom: 37px; }
.cal {
  display: flex; align-items: center; justify-content: center;
  border-radius: 2px; background: #fff;
  border-style: solid; border-width: 4px 4px 3px 2px;
  border-color: #4285f4 #fbbc04 #34a853 #4285f4;
}
.cal-num { font-size: 9px; font-weight: 700; color: #1a73e8; line-height: 1; }
.rail-sep { width: 20px; height: 1px; background: #3c3d3e; margin: -3px 0 34px; }

.upload { position: absolute; right: 24px; bottom: 0; width: 360px; height: 105px; border-radius: 16px 16px 0 0; overflow: hidden; background: #131314; }
.upload-head { height: 54px; padding: 16px 13px 0 17px; display: flex; align-items: flex-start; background: #1b1b1b; }
.upload-title { flex: 1; font-size: 16px; font-weight: 500; line-height: 22px; letter-spacing: .28px; color: #e3e3e3; }
.up-chev { margin-top: -1px; }
.up-x { margin: -1px 0 0 16px; }
.upload-row { height: 51px; padding: 0 15px 0 19px; display: flex; align-items: center; }
.clap { width: 16px; height: 14px; }
.upload-name { flex: 1; margin-left: 18px; font-size: 14px; font-weight: 500; color: #e3e3e3; }

.watermark { position: absolute; left: 1083px; top: 617px; font-family: "Open Sans", sans-serif; color: rgba(255,255,255,.4); pointer-events: none; white-space: nowrap; }
.wm-title { font-size: 19px; line-height: 26px; }
.wm-sub { font-size: 14px; line-height: 20px; margin-top: -1px; letter-spacing: .14px; }

/* windows taskbar */
.taskbar {
  height: 48px; flex: none; display: flex; align-items: center;
  border-top: 1px solid #444;
  background: linear-gradient(90deg, #1c2020 0%, #1e2120 30%, #272019 50%, #1e1e1d 70%, #1f1f1e 100%);
  font-family: "Open Sans", "Noto Sans", sans-serif; color: #fff;
}
.widget { width: 377px; flex: none; padding-left: 20px; display: flex; align-items: center; gap: 10px; font-size: 11.500px; line-height: 16px; margin-top: -1px; }
.widget-i { width: 20px; height: 26px; }
.w-sub { color: #d0d0d0; }
.winlogo { width: 23px; height: 23px; }
.ts-search {
  width: 218px; height: 30px; margin: -1px 0 0 14px; padding: 0 14px 0 8px;
  border-radius: 15px; background: #f0f0f0; display: flex; align-items: center;
}
.ts-label { flex: 1; margin-left: 8px; font-size: 13.500px; color: #555; }
.flower { width: 28px; height: 28px; }
.apps-row { display: flex; margin-left: 3px; }
.ta { position: relative; width: 44px; height: 40px; display: flex; align-items: center; justify-content: center; }
.ta-i { width: 24px; height: 24px; }
.ta.on::before { content: ""; position: absolute; left: 2px; right: 2px; top: 0; bottom: 0; border-radius: 4px; background: #333; border: 1px solid #3d3d3d; }
.chrome {
  position: relative; width: 24px; height: 24px; border-radius: 50%;
  background: conic-gradient(from -60deg, #ea4335 0 120deg, #fbc02d 120deg 240deg, #2e9e4f 240deg 360deg);
  display: flex; align-items: center; justify-content: center;
}
.chrome-core { width: 12px; height: 12px; border-radius: 50%; background: #4285f4; border: 2px solid #fff; }
.ta-badge {
  position: absolute; right: 4px; top: 1px; width: 15px; height: 15px; border-radius: 50%;
  background: #ec407a; color: #fff; font-size: 9px; line-height: 15px; text-align: center;
}
.ta-bar { position: absolute; left: 14px; bottom: 2px; width: 16px; height: 3px; border-radius: 2px; background: #60cdff; }
.ta-dot { position: absolute; left: 19px; bottom: 2px; width: 6px; height: 3px; border-radius: 2px; background: #9a9a9a; }
.pr {
  width: 22px; height: 22px; border-radius: 4px; background: #00005b;
  color: #9999ff; font-size: 13px; font-weight: 700; line-height: 22px; text-align: center;
}
.new-tag { font-size: 5px; font-weight: 700; fill: #063; text-anchor: middle; }
.tray { margin-left: auto; display: flex; align-items: center; height: 100%; padding-right: 13px; }
.tray-slot { display: flex; align-items: center; justify-content: center; }
.chev { width: 32px; }
.cloud { width: 30px; }
.net { width: 32px; }
.vol { width: 22px; }
.clock { width: 75px; text-align: right; font-size: 11.500px; line-height: 16px; margin-top: -1px; }
.bell { width: 30px; }
```
